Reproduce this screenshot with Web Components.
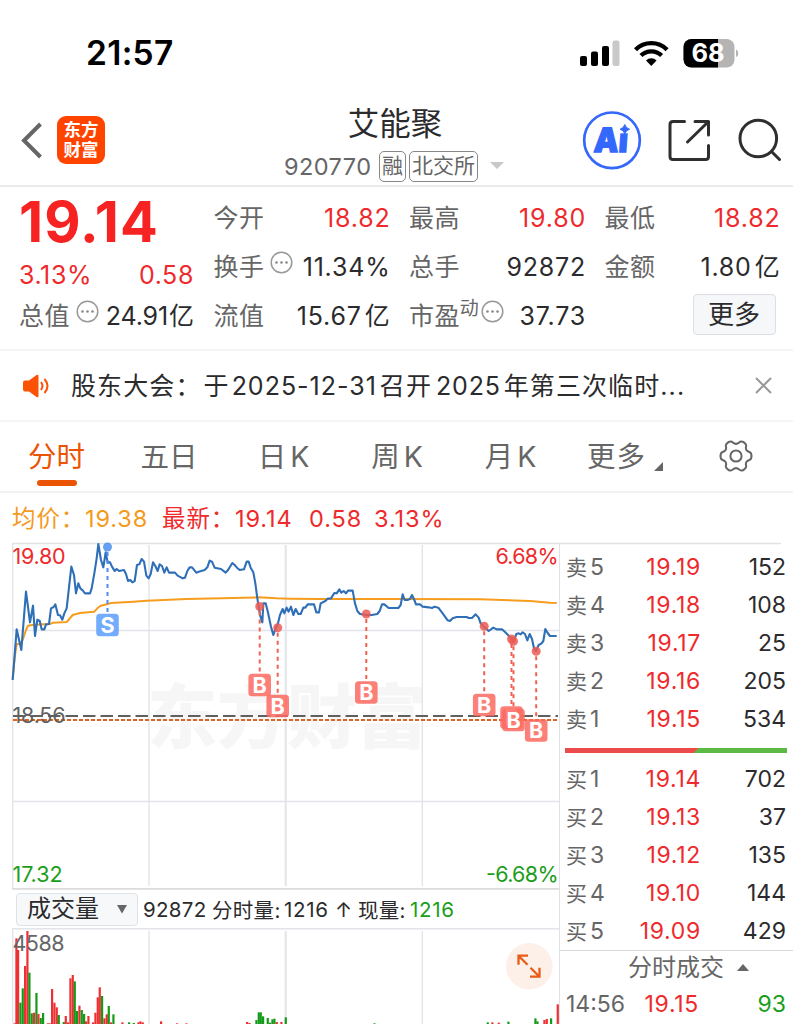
<!DOCTYPE html>
<html lang="zh-CN">
<head>
<meta charset="UTF-8">
<title>艾能聚 920770</title>
<style>
    body {
        margin: 0;
        width: 793px;
        height: 1024px;
        overflow: hidden;
        background: #fff;
        color: #2b2b2d;
        font-family: Inter, "Noto Sans CJK SC", sans-serif;
        font-weight: 400;
        --red: #ee2a2c;
        --green: #1a9e1a;
        --gray: #666;
        --line: #f0f0f0;
    }

    .market {
        display: flex;
        height: 481px;
    }

    .charts {
        width: 559px;
        display: flex;
        flex-direction: column;
    }
</style>
</head>
<body>
<status-bar></status-bar>
<app-header code="920770">艾能聚</app-header>
<quote-panel></quote-panel>
<notice-bar>股东大会：<span style="margin-left:2px">于</span><span style="margin:0 3px 0 2px;letter-spacing:1px">2025-12-31</span>召开<span style="margin:0 3px 0 4px;letter-spacing:.8px">2025</span>年第三次临时...</notice-bar>
<period-tabs></period-tabs>
<price-line></price-line>
<div class="market">
    <div class="charts">
        <minute-chart></minute-chart>
        <volume-bar></volume-bar>
        <volume-chart></volume-chart>
    </div>
    <order-book></order-book>
</div>

<script>
class StatusBar extends HTMLElement {
    constructor() {
        super();
        this.attachShadow({ mode: 'open' });
    }

    connectedCallback() {
        this.shadowRoot.innerHTML = `
            <style>
                :host {
                    display: flex;
                    justify-content: space-between;
                    align-items: center;
                    height: 106px;
                    padding: 0 54px 0 86px;
                    box-sizing: border-box;
                    color: #000;
                }

                .time {
                    font-size: 33.5px;
                    font-weight: 600;
                    letter-spacing: 0.300px;
                }

                svg {
                    display: block;
                }
            </style>
            <span class="time">21:57</span>
            <svg width="160" height="30" viewBox="0 0 160 30">
                <rect x="1" y="18" width="7" height="10" rx="2"/>
                <rect x="12" y="13.500" width="7" height="14.500" rx="2"/>
                <rect x="23" y="8" width="7" height="20" rx="2"/>
                <rect x="33.500" y="2.500" width="7" height="25.500" rx="2" fill="#c9c9c9"/>
                <g fill="none" stroke="#000" stroke-width="4.300">
                    <path d="M56.500 11.700a22.300 22.300 0 0 1 31.600 0"/>
                    <path d="M62 17.600a14.600 14.600 0 0 1 20.600 0"/>
                </g>
                <path d="M67 22.500a7.600 7.600 0 0 1 10.600 0L72.300 28z"/>
                <clipPath id="batt"><rect x="104.500" y="1" width="51" height="28.500" rx="8"/></clipPath>
                <g clip-path="url(#batt)">
                    <rect x="104" y="0" width="52" height="30" fill="#b4b4b4"/>
                    <rect x="104" y="0" width="35" height="30"/>
                </g>
                <path d="M157 11.500c3 1 3 6.500 0 7.500z" fill="#b4b4b4"/>
                <text x="112.500" y="24.300" font-size="25.500" font-weight="650" fill="#fff" textLength="33">68</text>
            </svg>
        `;
    }
}

class AppHeader extends HTMLElement {
    constructor() {
        super();
        this.attachShadow({ mode: 'open' });
    }

    connectedCallback() {
        this.shadowRoot.innerHTML = `
            <style>
                :host {
                    display: grid;
                    grid-template-columns: 264px 1fr 264px;
                    height: 81px;
                    box-sizing: border-box;
                    border-bottom: 2px solid #ebebeb;
                }

                .left, .right {
                    display: flex;
                    align-items: center;
                }

                .left {
                    padding: 0 0 12px 20px;
                }

                .logo {
                    width: 48px;
                    height: 48px;
                    margin-left: 14px;
                    box-sizing: border-box;
                    padding-top: 3px;
                    border-radius: 9px;
                    background: #ff4400;
                    color: #fff;
                    font: 700 17.500px/20px "Noto Sans CJK SC", sans-serif;
                    text-align: center;
                }

                .title {
                    padding-right: 3px;
                    font-size: 31.500px;
                    line-height: 36px;
                    text-align: center;
                }

                .sub {
                    display: flex;
                    align-items: center;
                    height: 32px;
                    margin: 8px 0 0 20px;
                    color: var(--gray);
                    white-space: nowrap;
                }

                .code {
                    font-size: 23.500px;
                    letter-spacing: 0.450px;
                    width: 95px;
                }

                .badge {
                    box-sizing: border-box;
                    height: 31px;
                    margin-right: 3px;
                    padding: 0 2px;
                    border: 1.500px solid #888;
                    border-radius: 5px;
                    font-size: 21px;
                    line-height: 28px;
                }

                .sub svg {
                    margin-left: 9px;
                }

                .right {
                    padding: 0 0 12px 52px;
                }
            </style>
            <div class="left">
                <svg width="23" height="40" viewBox="0 0 23 40" fill="none" stroke="#666" stroke-width="4"><path d="M20.500 4 4 20.500l16.500 16.500"/></svg>
                <div class="logo">东方<br>财富</div>
            </div>
            <div>
                <div class="title"><slot></slot></div>
                <div class="sub">
                    <span class="code">${this.getAttribute('code')}</span>
                    <span class="badge">融</span>
                    <span class="badge">北交所</span>
                    <svg width="14" height="8"><path d="M0 0h14L7 7z" fill="#c8c8c8"/></svg>
                </div>
            </div>
            <div class="right">
                <svg width="212" height="64" viewBox="581 108 212 64" fill="none">
                    <text x="594" y="152" font-size="33.500" font-weight="900" fill="#3467fb" stroke="#3467fb" stroke-width="1.300" textLength="34" lengthAdjust="spacingAndGlyphs" transform="translate(611 140) skewX(-4) translate(-611 -140)">Ai</text>
                    <path d="M616.500 120h14v13.300h-14z" fill="#fff"/>
                    <path d="M624.800 124.500q1 3.700 4.700 4.700-3.700 1-4.700 4.700-1-3.700-4.700-4.700 3.700-1 4.700-4.700z" fill="#3467fb" stroke="#3467fb"/>
                    <circle cx="612" cy="140.300" r="27.800" stroke="#3467fb" stroke-width="2.700"/>
                    <g stroke="#2f2f31" stroke-width="3" stroke-linecap="round" stroke-linejoin="round">
                        <path d="M684.500 121.500h-11.500q-3 0-3 3v32q0 3 3 3h32.500q3 0 3-3v-11M695 121.500h13.500v13.500M708 122l-20.500 20"/>
                        <circle cx="758.300" cy="138.500" r="18.300"/>
                        <path d="M771.500 151.500l8 8"/>
                    </g>
                </svg>
            </div>
        `;
    }
}

// label on the left, value on the right
class QuoteCell extends HTMLElement {
    constructor() {
        super();
        this.attachShadow({ mode: 'open' });
    }

    connectedCallback() {
        const info = this.hasAttribute('info') ? `
            <svg width="23" height="23" viewBox="0 0 23 23"><circle cx="11.500" cy="11.500" r="10.300" fill="none" stroke="#999" stroke-width="1.500"/><g fill="#888"><circle cx="6.500" cy="11.500" r="1.300"/><circle cx="11.500" cy="11.500" r="1.300"/><circle cx="16.500" cy="11.500" r="1.300"/></g></svg>` : '';
        const sup = this.hasAttribute('sup') ? `<span class="sup">${this.getAttribute('sup')}</span>` : '';
        this.shadowRoot.innerHTML = `
            <style>
                :host {
                    display: flex;
                    align-items: center;
                    height: 49px;
                    font-size: 25px;
                    line-height: 51px;
                    white-space: nowrap;
                }

                .label {
                    color: var(--gray);
                    letter-spacing: 0.400px;
                    margin-right: 6px;
                }

                .sup {
                    color: var(--gray);
                    font-size: 19px;
                    margin: -16px 2px 0 -6px;
                }

                svg {
                    margin-top: -11px;
                }

                .value {
                    margin: 0 -1px 0 auto;
                    letter-spacing: 0.800px;
                }

                :host([tight]) .value {
                    letter-spacing: -0.100px;
                    margin-right: 0;
                }

                :host([up]) .value {
                    color: var(--red);
                }
            </style>
            <span class="label">${this.getAttribute('label')}</span>${sup}${info}
            <span class="value"><slot></slot></span>
        `;
    }
}

class QuotePanel extends HTMLElement {
    constructor() {
        super();
        this.attachShadow({ mode: 'open' });
    }

    connectedCallback() {
        this.shadowRoot.innerHTML = `
            <style>
                :host {
                    display: grid;
                    grid-template-columns: 175px 176px 176px 175px;
                    column-gap: 19.500px;
                    height: 164px;
                    box-sizing: border-box;
                    padding: 7px 0 0 19px;
                    border-bottom: 2px solid #f4f4f4;
                }

                .price {
                    height: 57px;
                    color: #f72323;
                    font-size: 56px;
                    font-weight: 650;
                    line-height: 57px;
                    letter-spacing: 1.100px;
                }

                .change {
                    display: flex;
                    justify-content: space-between;
                    height: 41px;
                    color: var(--red);
                    font-size: 25px;
                    line-height: 49px;
                    letter-spacing: 0.600px;
                }

                .unit {
                    margin-left: 3px;
                }

                .more {
                    width: 83px;
                    height: 41px;
                    margin: 2px 0 0 88px;
                    box-sizing: border-box;
                    border: 1.500px solid #dcdfe3;
                    border-radius: 4px;
                    background: #f6f7f9;
                    font-size: 26px;
                    line-height: 40px;
                    text-align: center;
                }
            </style>
            <div>
                <div class="price">19.14</div>
                <div class="change"><span>3.13%</span><span>0.58</span></div>
                <quote-cell label="总值" info tight>24.91<span style="margin-left:1px">亿</span></quote-cell>
            </div>
            <div>
                <quote-cell label="今开" up>18.82</quote-cell>
                <quote-cell label="换手" info>11.34%</quote-cell>
                <quote-cell label="流值">15.67<span class="unit">亿</span></quote-cell>
            </div>
            <div>
                <quote-cell label="最高" up>19.80</quote-cell>
                <quote-cell label="总手">92872</quote-cell>
                <quote-cell label="市盈" sup="动" info>37.73</quote-cell>
            </div>
            <div>
                <quote-cell label="最低" up>18.82</quote-cell>
                <quote-cell label="金额">1.80<span class="unit">亿</span></quote-cell>
                <div class="more">更多</div>
            </div>
        `;
    }
}

class NoticeBar extends HTMLElement {
    constructor() {
        super();
        this.attachShadow({ mode: 'open' });
    }

    connectedCallback() {
        this.shadowRoot.innerHTML = `
            <style>
                :host {
                    display: flex;
                    align-items: center;
                    height: 71px;
                    box-sizing: border-box;
                    padding: 0 20px 0 22px;
                    border-bottom: 2px solid #f4f4f4;
                }

                .text {
                    flex: 1;
                    margin: -3px 0 0 21px;
                    font-size: 25px;
                    letter-spacing: 1.100px;
                    white-space: nowrap;
                }
            </style>
            <svg width="28" height="24" viewBox="0 0 28 24">
                <path d="M3 6.500h4L14.500 1q2-1 2 1v20q0 2-2 1L7 17.500H3q-2 0-2-2v-7q0-2 2-2z" fill="#fc5206"/>
                <path d="M19 8q3 4 0 8M22.500 5q6 7 0 14" fill="none" stroke="#fc5206" stroke-width="2"/>
            </svg>
            <span class="text"><slot></slot></span>
            <svg width="19" height="19" viewBox="0 0 19 19"><path d="M2 2l15 15M17 2 2 17" stroke="#999" stroke-width="2"/></svg>
        `;
    }
}

class PeriodTabs extends HTMLElement {
    constructor() {
        super();
        this.attachShadow({ mode: 'open' });
    }

    connectedCallback() {
        this.shadowRoot.innerHTML = `
            <style>
                :host {
                    display: grid;
                    grid-template-columns: 113px 112px 117px 110px 117px 112px 1fr;
                    height: 71px;
                    box-sizing: border-box;
                    border-bottom: 2px solid #f2f2f2;
                    color: var(--gray);
                    font-size: 28.500px;
                    line-height: 69px;
                    text-align: center;
                    white-space: nowrap;
                }

                .active {
                    color: #ea5404;
                }

                .active::after {
                    content: "";
                    display: block;
                    width: 40px;
                    height: 6px;
                    margin: -11px auto 0;
                    border-radius: 3px;
                    background: #ea5404;
                }

                i {
                    margin-left: 4px;
                    font-style: normal;
                }

                .more {
                    letter-spacing: 1px;
                }

                .more svg {
                    margin: 0 0 -4px 8px;
                }

                .gear {
                    display: block;
                    margin: 16px 0 0 37px;
                }
            </style>
            <div class="active">分时</div>
            <div>五日</div>
            <div>日<i>K</i></div>
            <div>周<i>K</i></div>
            <div>月<i>K</i></div>
            <div class="more">更多<svg width="9" height="9" viewBox="0 0 9 9"><path d="M9 0v9H0z" fill="#666"/></svg></div>
            <svg class="gear" width="36" height="36" viewBox="-18 -18 36 36" fill="none" stroke="#666" stroke-width="2" stroke-linejoin="round">
                <circle r="5.600"/>
                <path d="M-7.500-14Q-4.500-15.300-3.200-13.500Q0-10.800 3.200-13.500Q4.500-15.300 7.500-14L10-11.500Q10.500-10 9.800-8.500Q9.800-5 13.500-4Q15.500-3.200 15.500 0Q15.500 3.200 13.500 4Q9.800 5 9.800 8.500Q10.500 10 10 11.500L7.500 14Q4.500 15.300 3.200 13.500Q0 10.800-3.200 13.500Q-4.500 15.300-7.500 14L-10 11.500Q-10.500 10-9.800 8.500Q-9.800 5-13.500 4Q-15.500 3.200-15.500 0Q-15.500-3.200-13.500-4Q-9.800-5-9.800-8.500Q-10.500-10-10-11.500Z"/>
            </svg>
        `;
    }
}

class PriceLine extends HTMLElement {
    constructor() {
        super();
        this.attachShadow({ mode: 'open' });
    }

    connectedCallback() {
        this.shadowRoot.innerHTML = `
            <style>
                :host {
                    display: flex;
                    height: 50px;
                    padding-left: 12px;
                    color: var(--red);
                    font-size: 23.500px;
                    line-height: 52px;
                    letter-spacing: 0.900px;
                    white-space: nowrap;
                }

                .avg {
                    color: #f59a1b;
                }
            </style>
            <span class="avg" style="width:73px">均价：</span>
            <span class="avg" style="width:77px">19.38</span>
            <span style="width:73px">最新：</span>
            <span style="width:74px">19.14</span>
            <span style="width:65px">0.58</span>
            <span>3.13%</span>
        `;
    }
}

// chart samples are kept at three units per pixel
const PRICE = '38,435 50,283 64,345 78,170 90,262 99,212 105,303 112,254 119,257 125,283 133,283 138,268 147,267 153,220 161,216 166,208 174,240 180,241 187,254 193,235 200,220 214,95 222,120 228,175 235,145 241,160 248,166 255,175 270,175 275,160 283,115 290,70 295,27 303,75 310,97 317,52 323,82 330,82 336,95 344,108 350,102 357,108 372,105 378,117 384,138 391,135 397,142 404,138 411,90 418,88 425,72 432,80 439,122 446,130 452,117 459,82 466,93 473,108 479,88 486,93 493,113 500,97 507,113 525,113 533,122 548,130 555,128 562,108 569,97 576,97 589,113 596,110 614,105 622,97 629,77 636,80 644,98 663,102 677,113 684,105 697,84 704,90 711,98 719,105 732,103 740,80 746,80 752,98 760,112 766,145 772,190 776,215 780,240 787,262 790,205 797,205 803,228 813,275 820,300 827,280 834,265 840,240 848,222 853,235 860,218 866,230 873,215 880,240 887,222 895,237 902,237 910,218 916,218 923,208 942,208 949,232 957,232 962,205 976,198 983,191 993,190 1003,174 1010,175 1018,163 1024,173 1031,168 1038,175 1044,167 1058,167 1065,205 1072,228 1080,237 1099,240 1115,240 1132,237 1139,228 1146,208 1153,208 1166,219 1195,219 1202,210 1208,178 1214,195 1222,195 1230,192 1236,180 1243,195 1248,208 1260,208 1268,215 1286,217 1296,219 1304,215 1315,218 1328,235 1343,256 1350,258 1358,250 1370,246 1400,246 1406,249 1416,249 1427,238 1436,248 1442,265 1452,275 1466,288 1480,278 1490,283 1506,283 1512,288 1524,300 1534,310 1541,320 1549,297 1556,295 1562,298 1568,292 1575,297 1582,316 1589,297 1596,312 1602,340 1608,348 1616,330 1624,326 1630,318 1636,282 1643,294 1650,303 1670,303';
const AVERAGE = '38,430 45,360 50,327 60,327 68,315 78,285 84,272 97,270 130,268 150,267 160,263 200,261 208,252 218,240 240,234 283,230 292,220 302,212 320,208 333,204 400,200 440,197 560,192 700,189 775,187 830,190 870,191 960,192 1180,192 1440,193 1590,198 1650,203 1670,204';

// letter, x, y of the dot, y of the box
const TRADES = [
    ['S', 107.5, 4, 82],
    ['B', 259.7, 63.5, 142],
    ['B', 277.7, 84.7, 163],
    ['B', 366.3, 71, 149.5],
    ['B', 484.2, 83.3, 162],
    ['B', 511.5, 96, 174.5],
    ['B', 513.5, 98.3, 177],
    ['B', 536.2, 108.3, 187.5]
];

class MinuteChart extends HTMLElement {
    constructor() {
        super();
        this.attachShadow({ mode: 'open' });
    }

    connectedCallback() {
        const marks = TRADES.map(([side, x, dot, box]) => {
            const color = side === 'S' ? '#5b9dfb' : '#fb6a60';
            const line = side === 'S' ? '#4a8ff0' : '#f0604f';
            return `
                <path d="M${x} ${dot + 5}V${box - 11}" stroke="${line}" stroke-width="2" stroke-dasharray="4 4"/>
                <circle cx="${x}" cy="${dot}" r="4.500" fill="${side === 'S' ? '#4a8ff0' : '#ec5a53'}" fill-opacity=".85"/>
                <rect x="${x - 11.3}" y="${box - 11.3}" width="22.600" height="22.600" rx="3.500" fill="${color}" fill-opacity=".85"/>
                <text x="${x}" y="${box + 7.7}" font-size="21.500" font-weight="700" fill="#fff" text-anchor="middle">${side}</text>`;
        }).join('');

        this.shadowRoot.innerHTML = `
            <style>
                :host {
                    display: block;
                    height: 347px;
                }

                svg {
                    display: block;
                    overflow: visible;
                }
            </style>
            <svg width="560" height="347">
                <text x="147" y="200" font-size="70" font-weight="900" fill="#f6f6f6" textLength="280">东方财富</text>
                <path d="M12 .5H781" stroke="#dfe1e4" stroke-width="1.300"/>
                <path d="M12.700 0V345M149 2V343M422.300 2V343M12 87.500H559M12 258.500H559" stroke="#e3e4ea" stroke-width="1.400"/>
                <path d="M285.700 2V343" stroke="#e3e4ea" stroke-width="2"/>
                <path d="M12 345.800H559" stroke="#dcdcdc" stroke-width="1.800"/>
                <path d="M13 173H558" stroke="#606060" stroke-width="2" stroke-dasharray="12.500 5"/>
                <path d="M13 177H559" stroke="#df6322" stroke-width="2" stroke-dasharray="4 2"/>
                <g transform="translate(0 -8) scale(.33333)" fill="none" stroke-linejoin="round">
                    <polyline points="${AVERAGE}" stroke="#f79d1e" stroke-width="6"/>
                    <polyline points="${PRICE}" stroke="#2f6fb8" stroke-width="6.300"/>
                </g>
                ${marks}
                <g font-size="21.500">
                    <text x="12.500" y="20.500" fill="#ee2a2c" textLength="53">19.80</text>
                    <text x="12.500" y="179.500" fill="#606060" textLength="53">18.56</text>
                    <text x="12.500" y="338.500" fill="#1a9e1a" textLength="50">17.32</text>
                    <text x="495.500" y="20.500" fill="#ee2a2c" textLength="63">6.68%</text>
                    <text x="486" y="338.500" fill="#1a9e1a" textLength="72.500">-6.68%</text>
                </g>
            </svg>
        `;
    }
}

class VolumeBar extends HTMLElement {
    constructor() {
        super();
        this.attachShadow({ mode: 'open' });
    }

    connectedCallback() {
        this.shadowRoot.innerHTML = `
            <style>
                :host {
                    display: flex;
                    align-items: center;
                    height: 38px;
                    padding-left: 16px;
                    font-size: 20.500px;
                    letter-spacing: 0.300px;
                    white-space: nowrap;
                }

                .select {
                    display: flex;
                    align-items: center;
                    justify-content: space-between;
                    width: 122px;
                    height: 33px;
                    box-sizing: border-box;
                    padding: 0 10px;
                    border: 1.500px solid #dfe2e6;
                    border-radius: 4px;
                    background: #f7f8fa;
                    font-size: 24px;
                    line-height: 28px;
                    letter-spacing: 0;
                }

                .now {
                    color: var(--green);
                    letter-spacing: 0.700px;
                }
            </style>
            <div class="select"><span>成交量</span><svg width="10" height="9"><path d="M0 0h10L5 8.500z" fill="#666"/></svg></div>
            <span style="margin-left:5px;width:69px">92872</span>
            <span style="width:72px">分时量:</span>
            <span style="width:51px;letter-spacing:.7px">1216</span>
            <span style="width:23px">↑</span>
            <span style="width:52px">现量:</span>
            <span class="now">1216</span>
        `;
    }
}

// x, top, r(ise) or g (fall)
const BARS = '41,490,r 46,235,r 51,270,r 58,428,g 65,385,g 72,318,r 79,213,r 85,338,g 92,460,g 99,458,r 106,399,g 112,462,r 119,474,g 126,459,g 140,490,r 146,490,r 153,387,r 160,428,r 167,442,r 173,465,g 188,486,g 194,468,r 201,487,r 208,355,r 215,345,r 221,364,g 228,453,g 235,437,r 242,450,g 249,462,g 255,484,r 262,468,r 276,487,r 283,458,r 290,412,r 296,382,r 303,408,g 310,475,r 317,463,r 323,438,g 330,487,r 337,463,g 364,487,r 384,487,g 398,489,g 412,487,r 418,484,r 425,487,r 480,484,r 528,490,r 556,490,r 738,486,r 745,489,r 766,480,g 773,457,g 779,457,g 786,469,g 800,474,g 807,488,g 814,478,g 820,476,g 827,486,r 841,486,r 854,472,g 1120,490,g 1460,487,g 1474,487,r 1493,488,r 1522,485,g 1603,475,g 1609,484,g 1630,480,r 1637,477,r 1650,475,g 1670,433,r';

class VolumeChart extends HTMLElement {
    constructor() {
        super();
        this.attachShadow({ mode: 'open' });
    }

    connectedCallback() {
        const bars = BARS.split(' ').map(bar => {
            const [x, top, dir] = bar.split(',');
            return `<rect x="${x}" y="${top}" width="6.600" height="${495 - top}" fill="${dir === 'r' ? '#ee3033' : '#149a18'}"/>`;
        }).join('');

        this.shadowRoot.innerHTML = `
            <style>
                :host {
                    display: block;
                    height: 96px;
                }

                svg {
                    display: block;
                }
            </style>
            <svg width="560" height="96">
                <path d="M12 .8H559M12.700 0V96M149 3V96M422.300 3V96" stroke="#e3e4ea" stroke-width="1.400"/>
                <path d="M285.700 3V96" stroke="#e3e4ea" stroke-width="2"/>
                <g transform="translate(0 -68) scale(.33333)">${bars}</g>
                <text x="12.500" y="23" font-size="21.500" fill="#666" textLength="52">4588</text>
                <circle cx="529.300" cy="38.300" r="23.300" fill="#fdf0e9"/>
                <path d="M518.500 37V28H528M519.500 29l8 8M539.500 40v9H530M538.500 48l-8-8" transform="translate(0 -.3)" fill="none" stroke="#ea5c14" stroke-width="2.300"/>
            </svg>
        `;
    }
}

class OrderBook extends HTMLElement {
    constructor() {
        super();
        this.attachShadow({ mode: 'open' });
    }

    rows(side, list) {
        return list.map(([level, price, volume]) => `
            <div class="row"><span class="level">${side}<i>${level}</i></span><span class="price">${price}</span><span>${volume}</span></div>`).join('');
    }

    connectedCallback() {
        const sell = [[5, '19.19', 152], [4, '19.18', 108], [3, '19.17', 25], [2, '19.16', 205], [1, '19.15', 534]];
        const buy = [[1, '19.14', 702], [2, '19.13', 37], [3, '19.12', 135], [4, '19.10', 144], [5, '19.09', 429]];

        this.shadowRoot.innerHTML = `
            <style>
                :host {
                    display: block;
                    flex: 1;
                    height: 481px;
                    box-sizing: border-box;
                    border-left: 1.500px solid #dfe1e4;
                    padding-top: 5px;
                    font-size: 23px;
                    white-space: nowrap;
                }

                .row {
                    display: grid;
                    grid-template-columns: 60px 75px 85px;
                    height: 38px;
                    margin-left: 6px;
                    line-height: 39px;
                    text-align: right;
                }

                .level {
                    color: var(--gray);
                    font-size: 21px;
                    text-align: left;
                }

                .level i {
                    margin-left: 3px;
                    font-size: 23px;
                    font-style: normal;
                }

                .price {
                    color: var(--red);
                    letter-spacing: 0.700px;
                }

                .ratio {
                    height: 5px;
                    margin: 10px 6px 7px 5px;
                    background: linear-gradient(135deg, #ec4b4b 58.600%, #5cb944 58.800%);
                }

                .title {
                    display: flex;
                    align-items: center;
                    justify-content: center;
                    height: 34px;
                    border-top: 1.500px solid #dadada;
                    padding-left: 24px;
                    color: var(--gray);
                    font-size: 24px;
                }

                .title span {
                    margin-top: -5px;
                }

                .title svg {
                    margin: -2px 0 0 13px;
                }

                .deal .price {
                    padding-right: 2px;
                }

                .deal span:last-child {
                    color: var(--green);
                }

                .deal .level {
                    font-size: 23px;
                }
            </style>
            ${this.rows('卖', sell)}
            <div class="ratio"></div>
            ${this.rows('买', buy)}
            <div class="title"><span>分时成交</span><svg width="12" height="7"><path d="M0 7h12L6 0z" fill="#666"/></svg></div>
            <div class="row deal"><span class="level">14:56</span><span class="price">19.15</span><span>93</span></div>
        `;
    }
}

customElements.define('status-bar', StatusBar);
customElements.define('app-header', AppHeader);
customElements.define('quote-cell', QuoteCell);
customElements.define('quote-panel', QuotePanel);
customElements.define('notice-bar', NoticeBar);
customElements.define('period-tabs', PeriodTabs);
customElements.define('price-line', PriceLine);
customElements.define('minute-chart', MinuteChart);
customElements.define('volume-bar', VolumeBar);
customElements.define('volume-chart', VolumeChart);
customElements.define('order-book', OrderBook);
</script>
</body>
</html>
